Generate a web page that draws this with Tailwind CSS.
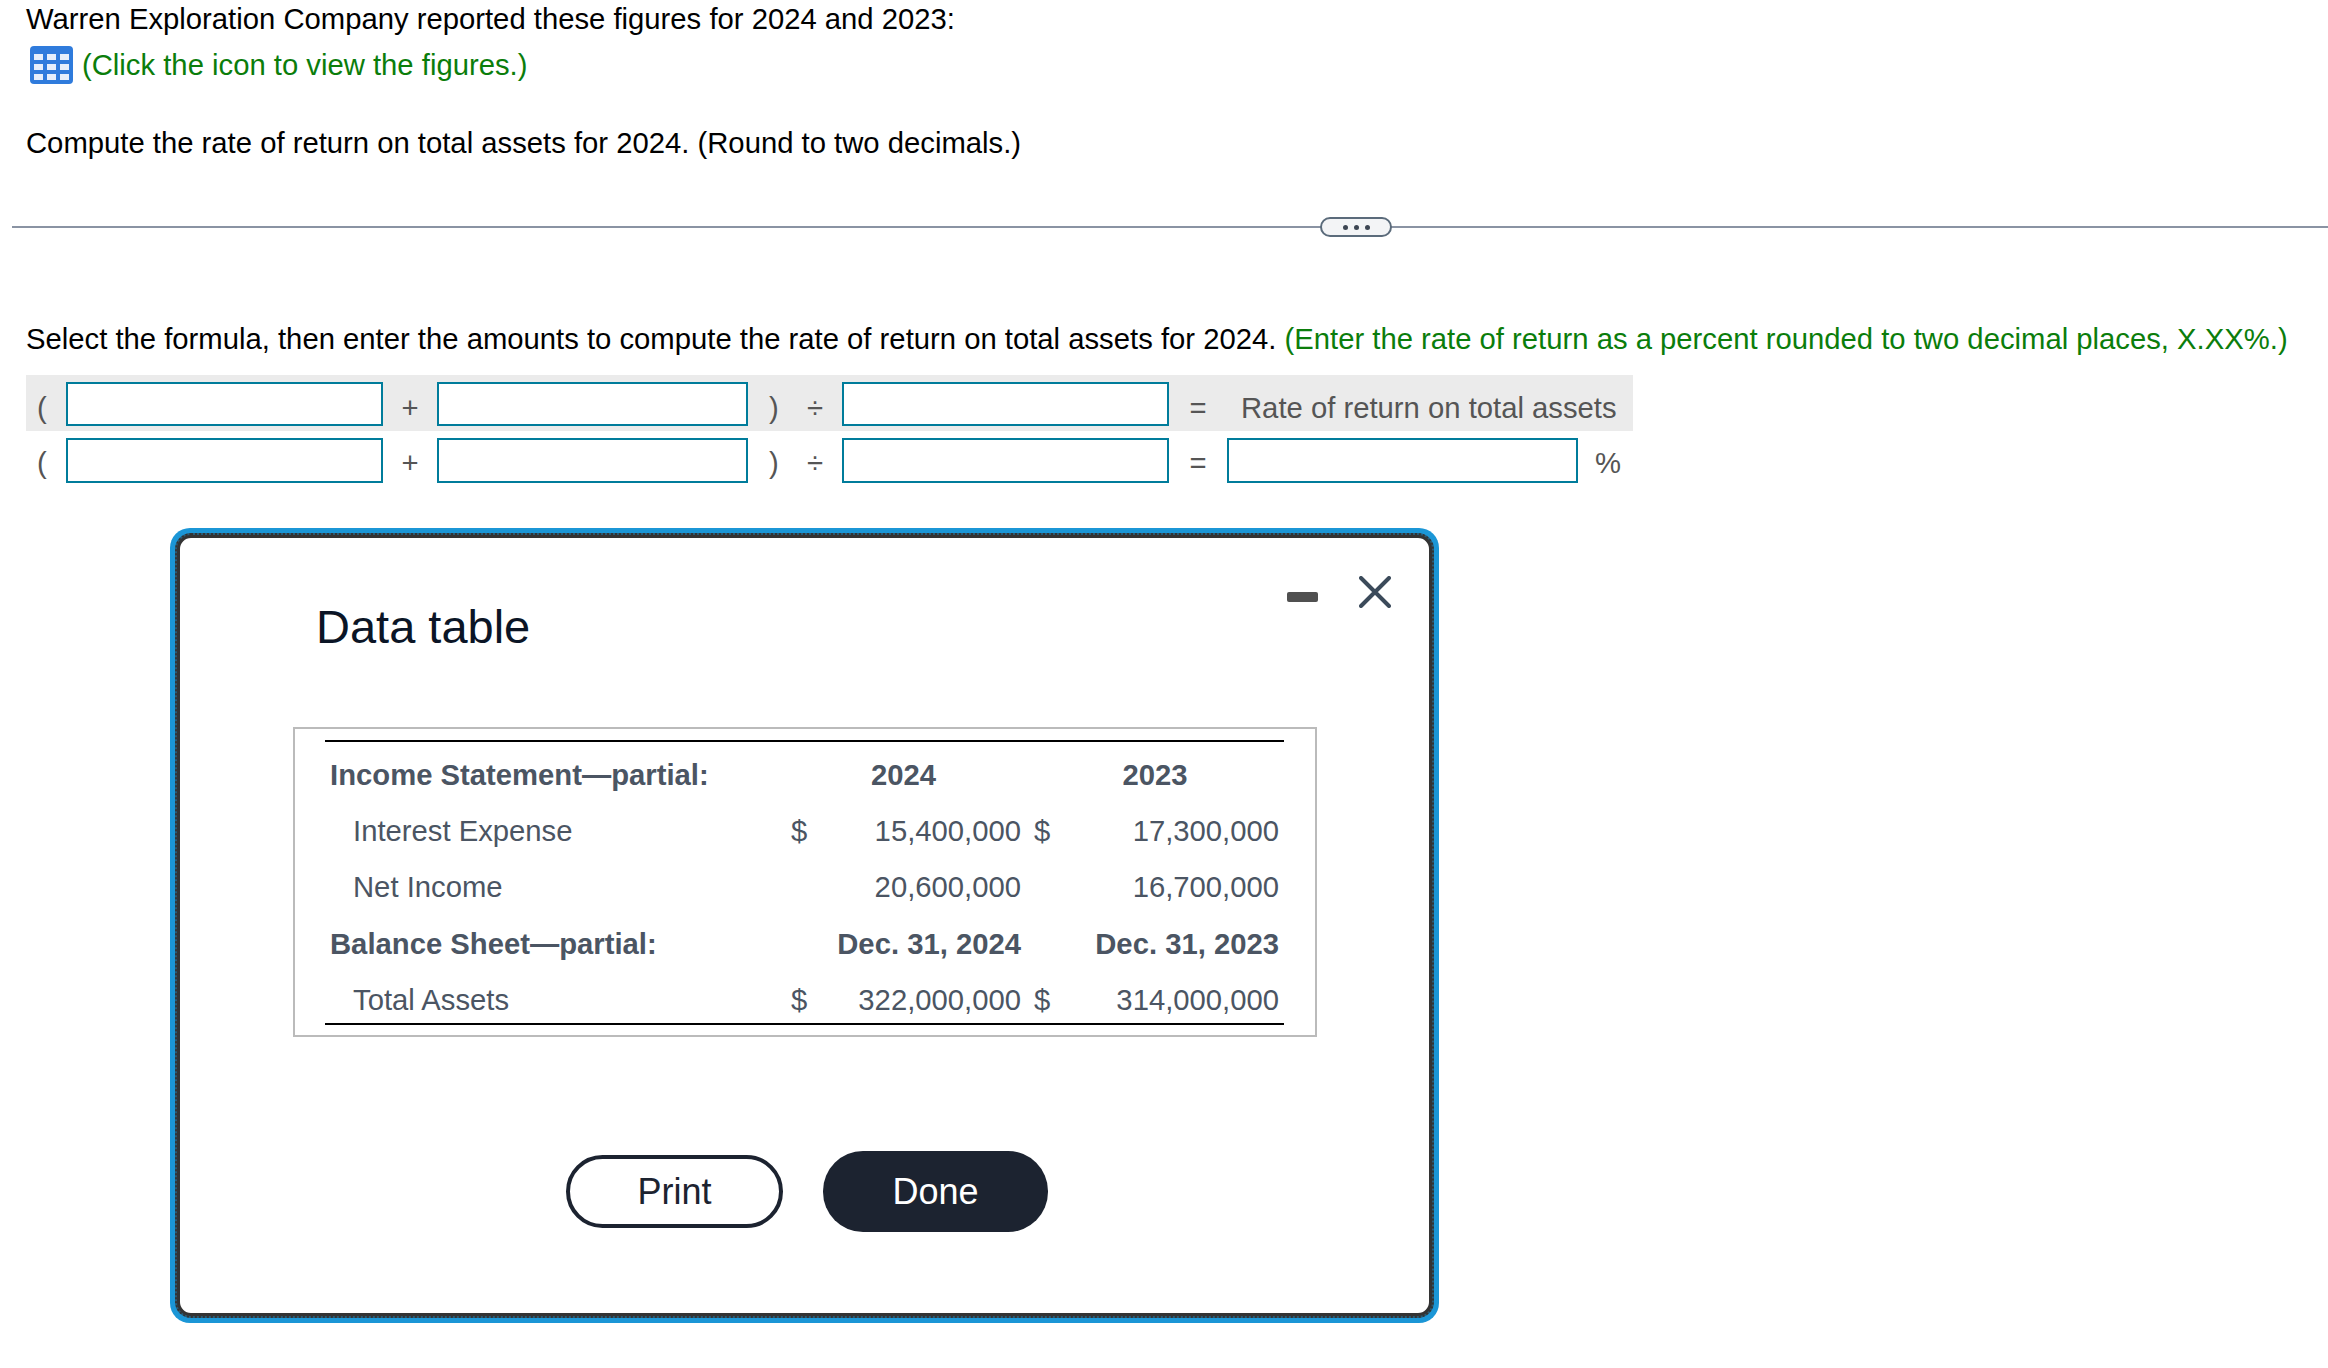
<!DOCTYPE html>
<html lang="en">
<head>
  <meta charset="UTF-8" />
  <title>Data table</title>
  <script src="https://cdn.jsdelivr.net/npm/@tailwindcss/browser@4"></script>
</head>
<body class="bg-white text-black font-['Liberation_Sans',Arial,sans-serif] text-[29.25px] leading-[38px] relative h-[1368px] overflow-hidden">

  <!-- question -->
  <div class="pl-[26px]">
    <p>Warren Exploration Company reported these figures for 2024 and 2023:</p>
    <p class="flex items-center mt-[5px] h-[44px] text-[#0b7d0b]">
      <svg class="ml-[4px] mr-[9px] w-[43px] h-[38px]" viewBox="0 0 43 38">
        <rect width="43" height="38" rx="4" fill="#2f7bdc"/>
        <g fill="#e6effb">
          <rect x="4" y="8" width="9" height="6"/><rect x="17" y="8" width="9" height="6"/><rect x="30" y="8" width="9" height="6"/>
          <rect x="4" y="18" width="9" height="6"/><rect x="17" y="18" width="9" height="6"/><rect x="30" y="18" width="9" height="6"/>
          <rect x="4" y="28" width="9" height="6"/><rect x="17" y="28" width="9" height="6"/><rect x="30" y="28" width="9" height="6"/>
        </g>
      </svg>
      (Click the icon to view the figures.)
    </p>
    <p class="mt-[37px]">Compute the rate of return on total assets for 2024. (Round to two decimals.)</p>
  </div>

  <!-- divider -->
  <div class="relative mt-[64px] ml-[12px] h-[2px] bg-[#8a93a3]">
    <div class="absolute left-[1308px] top-[-9px] w-[72px] h-[20px] rounded-full border-2 border-[#5b6b7b] bg-[#f3f4f6] flex items-center justify-center gap-[6px]">
      <span class="w-[5px] h-[5px] rounded-full bg-[#3d4653]"></span>
      <span class="w-[5px] h-[5px] rounded-full bg-[#3d4653]"></span>
      <span class="w-[5px] h-[5px] rounded-full bg-[#3d4653]"></span>
    </div>
  </div>

  <p class="pl-[26px] mt-[92px] whitespace-nowrap">Select the formula, then enter the amounts to compute the rate of return on total assets for 2024. <span class="text-[#0b7d0b]">(Enter the rate of return as a percent rounded to two decimal places, X.XX%.)</span></p>

  <!-- formula rows -->
  <div class="ml-[26px] mt-[17px] w-[1607px] text-[#555555]">
    <div class="flex items-center h-[56px] bg-[#ebebeb]">
      <span class="w-[40px] pl-[11px] pt-[10px]">(</span>
      <div class="w-[317px] h-[44px] mt-[2px] border-2 border-[#007c9b] bg-white"></div>
      <span class="w-[54px] text-center pt-[10px]">+</span>
      <div class="w-[311px] h-[44px] mt-[2px] border-2 border-[#007c9b] bg-white"></div>
      <span class="w-[36px] pl-[21px] pt-[10px]">)</span>
      <span class="w-[58px] text-center pl-[4px] pt-[10px]">÷</span>
      <div class="w-[327px] h-[44px] mt-[2px] border-2 border-[#007c9b] bg-white"></div>
      <span class="w-[58px] text-center pt-[10px]">=</span>
      <span class="ml-[14px] whitespace-nowrap pt-[10px]">Rate of return on total assets</span>
    </div>
    <div class="flex items-center h-[45px] mt-[7px]">
      <span class="w-[40px] pl-[11px] pt-[5px]">(</span>
      <div class="w-[317px] h-[45px] border-2 border-[#007c9b] bg-white"></div>
      <span class="w-[54px] text-center pt-[5px]">+</span>
      <div class="w-[311px] h-[45px] border-2 border-[#007c9b] bg-white"></div>
      <span class="w-[36px] pl-[21px] pt-[5px]">)</span>
      <span class="w-[58px] text-center pl-[4px] pt-[5px]">÷</span>
      <div class="w-[327px] h-[45px] border-2 border-[#007c9b] bg-white"></div>
      <span class="w-[58px] text-center pt-[5px]">=</span>
      <div class="w-[351px] h-[45px] border-2 border-[#007c9b] bg-white"></div>
      <span class="ml-[17px] pt-[5px]">%</span>
    </div>
  </div>

  <!-- data table popup -->
  <div class="absolute left-[170px] top-[528px] w-[1269px] h-[795px] rounded-[20px] bg-[#1b96d6] p-[5px]">
    <div class="w-full h-full rounded-[16px] border-[2px] border-dotted border-[#333333] bg-[#333333]/60">
      <div class="relative w-full h-full rounded-[14px] border-[3px] border-[#333333] bg-white">

        <h2 class="absolute left-[136px] top-[59px] text-[47px] leading-[60px] text-[#0b1526]">Data table</h2>

        <div class="absolute left-[1107px] top-[54px] w-[31px] h-[10px] rounded-[2px] bg-[#505050]"></div>
        <svg class="absolute left-[1179px] top-[38px] w-[32px] h-[32px]" viewBox="0 0 32 32" fill="none" stroke="#3b4a5a" stroke-width="4" stroke-linecap="round">
          <path d="M2 2 L30 30 M30 2 L2 30"/>
        </svg>

        <div class="absolute left-[113px] top-[189px] w-[1024px] h-[310px] border-2 border-[#bbbbbb] px-[30px] pt-[11px] text-[#4b5563]">
          <table class="w-[959px] table-fixed border-y-2 border-black">
            <colgroup>
              <col class="w-[467px]"/><col class="w-[50px]"/><col class="w-[179px]"/><col class="w-[36px]"/><col class="w-[227px]"/>
            </colgroup>
            <tbody>
              <tr class="h-[56.5px] font-bold *:pt-[10px]">
                <td class="pl-[5px]">Income Statement—partial:</td>
                <td colspan="2" class="text-center pr-[6px]">2024</td>
                <td colspan="2" class="text-center pl-[5px]">2023</td>
              </tr>
              <tr class="h-[56.5px] *:pt-[10px]">
                <td class="pl-[28px]">Interest Expense</td>
                <td class="-translate-x-[1px]">$</td>
                <td class="text-right">15,400,000</td>
                <td class="pl-[13px]">$</td>
                <td class="text-right pr-[5px]">17,300,000</td>
              </tr>
              <tr class="h-[56.5px] *:pt-[10px]">
                <td class="pl-[28px]">Net Income</td>
                <td></td>
                <td class="text-right">20,600,000</td>
                <td></td>
                <td class="text-right pr-[5px]">16,700,000</td>
              </tr>
              <tr class="h-[56.5px] font-bold *:pt-[10px]">
                <td class="pl-[5px]">Balance Sheet—partial:</td>
                <td colspan="2" class="text-right">Dec. 31, 2024</td>
                <td colspan="2" class="text-right pr-[5px]">Dec. 31, 2023</td>
              </tr>
              <tr class="h-[56.5px] *:pt-[10px]">
                <td class="pl-[28px]">Total Assets</td>
                <td class="-translate-x-[1px]">$</td>
                <td class="text-right">322,000,000</td>
                <td class="pl-[13px]">$</td>
                <td class="text-right pr-[5px]">314,000,000</td>
              </tr>
            </tbody>
          </table>
        </div>

        <div class="absolute left-[386px] top-[613px] flex items-center gap-[40px] text-[36px]">
          <button class="w-[217px] h-[73px] rounded-[37px] border-[4px] border-[#1c2330] bg-white text-[#1c2330]">Print</button>
          <button class="w-[225px] h-[81px] rounded-[40px] bg-[#1c2330] text-white">Done</button>
        </div>
      </div>
    </div>
  </div>

</body>
</html>
